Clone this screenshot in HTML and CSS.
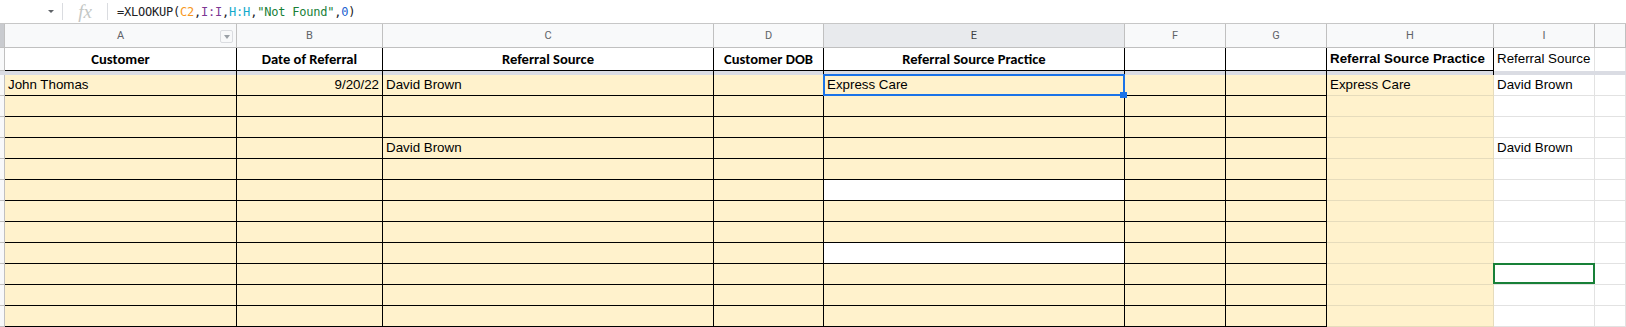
FILE: index.html
```
<!DOCTYPE html>
<html lang="en">
<head>
    <meta charset="UTF-8">
    <title>Referrals - Sheet</title>
    <link rel="stylesheet" href="styles.css">
</head>
<body>

    <div class="formula-bar">
        <div class="name-box"><span class="caret"></span></div>
        <div class="divider"></div>
        <div class="fx">fx</div>
        <div class="divider"></div>
        <div class="formula">=XLOOKUP(<span class="ref-c">C2</span>,<span class="ref-i">I:I</span>,<span class="ref-h">H:H</span>,<span class="str">"Not Found"</span>,<span class="num-lit">0</span>)</div>
    </div>

    <div class="sheet">
        <!-- column letters -->
        <div class="corner"></div>
        <div class="ch">A<span class="filter-btn"><span class="filter-caret"></span></span></div>
        <div class="ch">B</div>
        <div class="ch">C</div>
        <div class="ch">D</div>
        <div class="ch active">E</div>
        <div class="ch">F</div>
        <div class="ch">G</div>
        <div class="ch">H</div>
        <div class="ch">I</div>
        <div class="ch"></div>

        <!-- row 1 : headers -->
        <div class="rh"></div>
        <div class="hd">Customer</div>
        <div class="hd">Date of Referral</div>
        <div class="hd">Referral Source</div>
        <div class="hd">Customer DOB</div>
        <div class="hd">Referral Source Practice</div>
        <div class="hd"></div>
        <div class="hd"></div>
        <div class="hd-h">Referral Source Practice</div>
        <div class="hd-i">Referral Source</div>
        <div class="hd-j"></div>

        <!-- frozen divider -->
        <div class="frz"></div>
        <div class="frz b"></div>
        <div class="frz b"></div>
        <div class="frz b"></div>
        <div class="frz b"></div>
        <div class="frz b"></div>
        <div class="frz b"></div>
        <div class="frz b"></div>
        <div class="frz b"></div>
        <div class="frz"></div>
        <div class="frz"></div>

        <!-- row 2 -->
        <div class="rh"></div>
        <div class="c">John Thomas</div>
        <div class="c num">9/20/22</div>
        <div class="c">David Brown</div>
        <div class="c"></div>
        <div class="c sel">Express Care</div>
        <div class="c"></div>
        <div class="c"></div>
        <div class="h">Express Care</div>
        <div class="g">David Brown</div>
        <div class="g"></div>

        <!-- row 3 -->
        <div class="rh"></div>
        <div class="c"></div><div class="c"></div><div class="c"></div><div class="c"></div>
        <div class="c"></div><div class="c"></div><div class="c"></div>
        <div class="h"></div><div class="g"></div><div class="g"></div>

        <!-- row 4 -->
        <div class="rh"></div>
        <div class="c"></div><div class="c"></div><div class="c"></div><div class="c"></div>
        <div class="c"></div><div class="c"></div><div class="c"></div>
        <div class="h"></div><div class="g"></div><div class="g"></div>

        <!-- row 5 -->
        <div class="rh"></div>
        <div class="c"></div><div class="c"></div><div class="c">David Brown</div><div class="c"></div>
        <div class="c"></div><div class="c"></div><div class="c"></div>
        <div class="h"></div><div class="g">David Brown</div><div class="g"></div>

        <!-- row 6 -->
        <div class="rh"></div>
        <div class="c"></div><div class="c"></div><div class="c"></div><div class="c"></div>
        <div class="c"></div><div class="c"></div><div class="c"></div>
        <div class="h"></div><div class="g"></div><div class="g"></div>

        <!-- row 7 -->
        <div class="rh"></div>
        <div class="c"></div><div class="c"></div><div class="c"></div><div class="c"></div>
        <div class="c w"></div><div class="c"></div><div class="c"></div>
        <div class="h"></div><div class="g"></div><div class="g"></div>

        <!-- row 8 -->
        <div class="rh"></div>
        <div class="c"></div><div class="c"></div><div class="c"></div><div class="c"></div>
        <div class="c"></div><div class="c"></div><div class="c"></div>
        <div class="h"></div><div class="g"></div><div class="g"></div>

        <!-- row 9 -->
        <div class="rh"></div>
        <div class="c"></div><div class="c"></div><div class="c"></div><div class="c"></div>
        <div class="c"></div><div class="c"></div><div class="c"></div>
        <div class="h"></div><div class="g"></div><div class="g"></div>

        <!-- row 10 -->
        <div class="rh"></div>
        <div class="c"></div><div class="c"></div><div class="c"></div><div class="c"></div>
        <div class="c w"></div><div class="c"></div><div class="c"></div>
        <div class="h"></div><div class="g"></div><div class="g"></div>

        <!-- row 11 -->
        <div class="rh"></div>
        <div class="c"></div><div class="c"></div><div class="c"></div><div class="c"></div>
        <div class="c"></div><div class="c"></div><div class="c"></div>
        <div class="h"></div><div class="g peer"></div><div class="g"></div>

        <!-- row 12 -->
        <div class="rh"></div>
        <div class="c"></div><div class="c"></div><div class="c"></div><div class="c"></div>
        <div class="c"></div><div class="c"></div><div class="c"></div>
        <div class="h"></div><div class="g"></div><div class="g"></div>

        <!-- row 13 -->
        <div class="rh"></div>
        <div class="c"></div><div class="c"></div><div class="c"></div><div class="c"></div>
        <div class="c"></div><div class="c"></div><div class="c"></div>
        <div class="h"></div><div class="g"></div><div class="g"></div>
    </div>

</body>
</html>
```

FILE: styles.css
```
body {
    margin: 0;
    font-family: 'Liberation Sans', Arial, sans-serif;
    font-size: 13.33px;
    color: #000;
    background-color: #fff;
    overflow: hidden;
}

/* formula bar */
.formula-bar {
    display: flex;
    align-items: center;
    height: 23px;
    border-bottom: 1px solid #c7c7c7;
}
.name-box {
    width: 62px;
    display: flex;
    justify-content: flex-end;
    padding-right: 8px;
    box-sizing: border-box;
}
.caret {
    width: 0;
    height: 0;
    border-left: 3px solid transparent;
    border-right: 3px solid transparent;
    border-top: 3px solid #5f6368;
}
.divider {
    width: 1px;
    height: 17px;
    background-color: #dadce0;
}
.fx {
    width: 44px;
    text-align: center;
    font-family: 'Liberation Serif', serif;
    font-style: italic;
    font-size: 19px;
    line-height: 23px;
    color: #c4c7c5;
}
.formula {
    padding-left: 9px;
    font-family: 'DejaVu Sans Mono', monospace;
    font-size: 12px;
    letter-spacing: -0.22px;
    color: #202124;
}
.ref-c { color: #f7981d; }
.ref-i { color: #7e3794; }
.ref-h { color: #11a9cc; }
.str { color: #188038; }
.num-lit { color: #1a5fd0; }

/* grid */
.sheet {
    display: grid;
    grid-template-columns: 5px 232px 146px 331px 110px 301px 101px 101px 167px 101px 1fr;
    grid-template-rows: 24px 23px 4px repeat(12, 21px);
}
.sheet > div {
    box-sizing: border-box;
    white-space: nowrap;
    overflow: hidden;
}

.corner {
    background-color: #c9cbcf;
    border-right: 1px solid #c0c0c0;
    border-bottom: 1px solid #c0c0c0;
}
.rh {
    background-color: #f8f9fa;
    border-right: 1px solid #c0c0c0;
    border-bottom: 1px solid #c0c0c0;
}
.ch {
    position: relative;
    background-color: #f8f9fa;
    border-right: 1px solid #c0c0c0;
    border-bottom: 1px solid #c0c0c0;
    font-family: Roboto, sans-serif;
    font-size: 11px;
    line-height: 23px;
    text-align: center;
    color: #5f6368;
}
.ch.active {
    background-color: #e8eaed;
    color: #3c4043;
}
.filter-btn {
    position: absolute;
    top: 6px;
    right: 3px;
    width: 13px;
    height: 13px;
    box-sizing: border-box;
    border: 1px solid #dadce0;
    border-radius: 2px;
    display: flex;
    align-items: center;
    justify-content: center;
}
.filter-caret {
    width: 0;
    height: 0;
    border-left: 3.5px solid transparent;
    border-right: 3.5px solid transparent;
    border-top: 4px solid #9aa0a6;
}

/* header row */
.hd, .hd-h, .hd-i, .hd-j {
    line-height: 22px;
    padding: 0 3px;
}
.hd {
    border-right: 1px solid #000;
    border-bottom: 1px solid #000;
    font-family: Carlito, Calibri, Lato, sans-serif;
    font-weight: bold;
    font-size: 14.6px;
    text-align: center;
}
.hd-h {
    border-right: 1px solid #000;
    border-bottom: 1px solid #000;
    font-weight: bold;
}
.hd-i, .hd-j {
    border-right: 1px solid #e2e2e2;
}

.frz {
    background-color: #dadce3;
}
.frz.b {
    border-right: 1px solid #000;
}

/* data cells */
.c, .h, .g {
    line-height: 20px;
    padding: 0 3px;
}
.c {
    background-color: #fff2cc;
    border-right: 1px solid #000;
    border-bottom: 1px solid #000;
}
.c.w {
    background-color: #fff;
}
.num {
    text-align: right;
}
.h {
    background-color: #fff2cc;
    border-right: 1px solid #e6dcbc;
    border-bottom: 1px solid #e6dcbc;
}
.g {
    border-right: 1px solid #e2e2e2;
    border-bottom: 1px solid #e2e2e2;
}

/* selections */
.sheet > .sel, .sheet > .peer {
    position: relative;
    overflow: visible;
}
.sel::after {
    content: '';
    position: absolute;
    top: -1px;
    left: -1px;
    right: -1px;
    bottom: -1px;
    border: 2px solid #1a73e8;
    z-index: 2;
}
.sel::before {
    content: '';
    position: absolute;
    right: -3px;
    bottom: -3px;
    width: 7px;
    height: 6px;
    background-color: #1a73e8;
    z-index: 3;
}
.peer::after {
    content: '';
    position: absolute;
    top: -1px;
    left: -1px;
    right: -1px;
    bottom: 0;
    border: 2px solid #188038;
    z-index: 2;
}
```
